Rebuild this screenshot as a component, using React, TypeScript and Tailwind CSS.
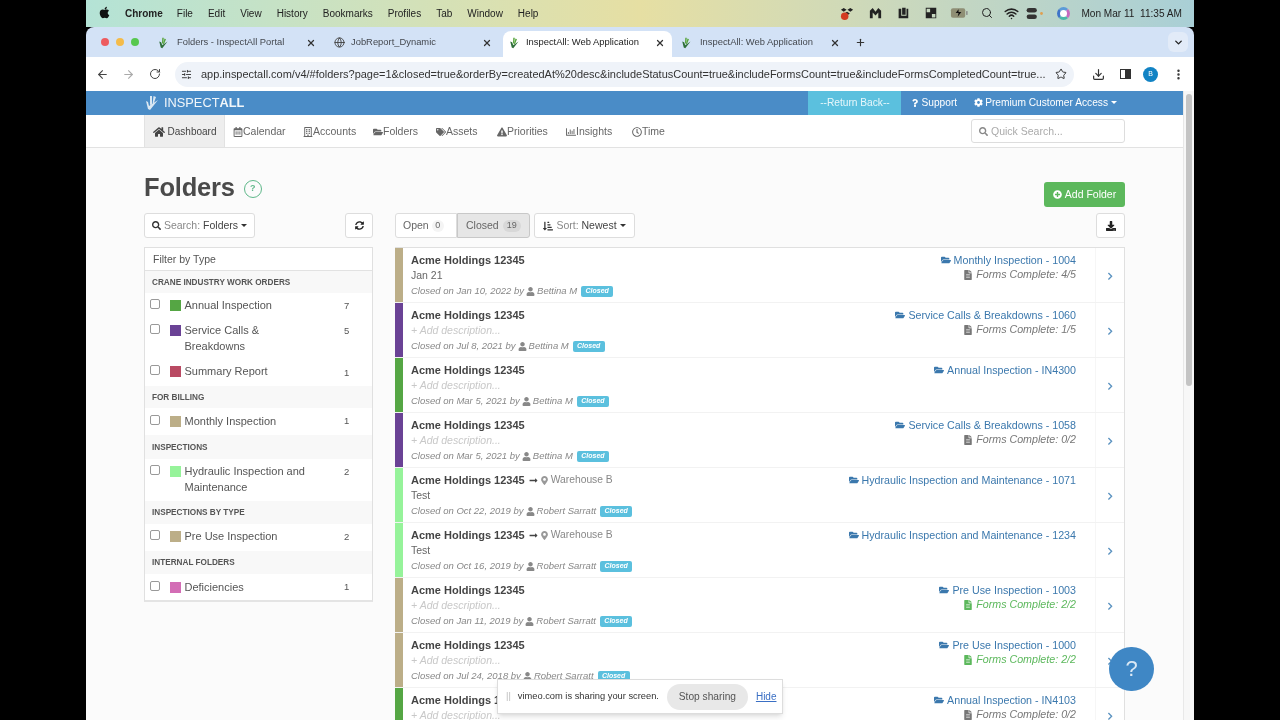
import React from "react";
import {
  FaApple, FaHome, FaRegCalendarAlt, FaRegBuilding, FaFolderOpen, FaTags, FaExclamationTriangle, FaRegChartBar, FaRegClock,
  FaSearch, FaSyncAlt, FaSortAmountDownAlt, FaUser, FaMapMarkerAlt, FaLongArrowAltRight, FaFileAlt, FaChevronRight,
  FaPlusCircle, FaDownload, FaCog, FaQuestion,
} from "react-icons/fa";
import { ArrowLeft, ArrowRight, RotateCw, Star, Download, MoreVertical, SlidersHorizontal, Globe, X, Plus, ChevronDown, Search, Wifi } from "lucide-react";

const Logo = ({ className }: { className?: string }) => (
  <svg viewBox="0 0 16 16" className={className}>
    <path d="M7 1 L9 1 L8.500 8 L6.500 9 Z" fill="#5aa63f" />
    <path d="M10 2 L12 3 L9.500 9 L7.500 10 Z" fill="#5aa63f" />
    <path d="M3 6 L5.500 7 L7 11 L14 6 L7 15 L5 14 Z" fill="#2f6f3a" />
  </svg>
);

const menu = ["File", "Edit", "View", "History", "Bookmarks", "Profiles", "Tab", "Window", "Help"];

const Slot = ({ w, children }: { w: string; children: React.ReactNode }) => (
  <div className={`${w} flex items-center justify-center`}>{children}</div>
);

function MenuBar() {
  return (
    <div className="h-[27px] shrink-0 flex items-center pl-[12px] pr-[12px] text-[10px] text-[#222] bg-gradient-to-r from-[#b4e3d6] via-[#e6dfa3] to-[#a9cfd6]">
      <FaApple className="text-[13px] text-[#111] mr-[14px] mb-[2px]" />
      <span className="font-bold mr-[14px]">Chrome</span>
      <div className="flex gap-[15px]">
        {menu.map((m) => (<span key={m}>{m}</span>))}
      </div>
      <div className="ml-auto flex items-center text-[#222]">
        <div className="flex items-center mr-[11px]">
          <Slot w="w-[28px]"><svg viewBox="0 0 16 16" className="w-[15px] h-[15px]"><path d="M4 2l3 2-3 2-3-2zM11 2l3 2-3 2-3-2zM7.500 6l3 2-3 2-3-2z" fill="#222" /><circle cx="5" cy="11" r="4" fill="#d33c22" /></svg></Slot>
          <Slot w="w-[28px]"><svg viewBox="0 0 16 16" className="w-[15px] h-[15px]"><path d="M2 13V5l3-3 3 4 3-4 3 3v8h-3V7L8 10 5 7v6z" fill="#222" /></svg></Slot>
          <Slot w="w-[28px]"><svg viewBox="0 0 16 16" className="w-[14px] h-[14px]"><path d="M3 3h3v8h6V3h2v11H3zM7 2h4v8H7z" fill="#222" /></svg></Slot>
          <Slot w="w-[28px]"><svg viewBox="0 0 16 16" className="w-[14px] h-[14px]"><path d="M2 2h12v12H2zM3 3v4h4V3zM9 9v4h4V9z" fill="#222" fillRule="evenodd" /></svg></Slot>
          <Slot w="w-[28px]"><svg viewBox="0 0 20 12" className="w-[19px] h-[12px]"><rect x="1" y="1" width="15" height="10" rx="2" fill="#8f8f75" /><path d="M9 2l-3 4h3l-1 4 4-5H9z" fill="#111" /><rect x="17" y="4" width="1.500" height="4" fill="#888" /></svg></Slot>
          <Slot w="w-[27px]"><Search size={12} strokeWidth={2} /></Slot>
          <Slot w="w-[23px]"><Wifi size={15} strokeWidth={2.5} /></Slot>
          <Slot w="w-[23px]"><svg viewBox="0 0 20 14" className="w-[20px] h-[13px]"><rect x="1" y="1" width="11" height="5" rx="2.500" fill="#333" /><rect x="1" y="8" width="11" height="5" rx="2.500" fill="#333" /><circle cx="17" cy="7" r="1.500" fill="#e0a050" /></svg></Slot>
        </div>
        <div className="w-[13px] h-[13px] rounded-full mr-[11px] border-[3px] border-t-[#5b9bd8] border-r-[#c66ac0] border-b-[#4cb8a8] border-l-[#3f74c8] bg-white" />
        <span className="text-[10.100px] whitespace-pre">Mon Mar 11  11:35 AM</span>
      </div>
    </div>
  );
}

const TabItem = ({ title, active, globe, w }: { title: string; active?: boolean; globe?: boolean; w: string }) => (
  <div className={`h-[26px] pb-[3px] flex items-center shrink-0 text-[9.400px] text-[#44484f] ${w} ${active ? "bg-white rounded-t-[8px] pl-[5px] pr-[7px]" : "pl-[8px]"}`}>
    {globe ? <Globe size={11} className="mr-[6px] text-[#444]" /> : <Logo className={`w-[12px] h-[12px] ${active ? "mr-[6px]" : "mr-[8px]"}`} />}
    <span className={active ? "text-[#222]" : ""}>{title}</span>
    <X size={10} strokeWidth={3} className="ml-auto text-[#333]" />
  </div>
);

function TabStrip() {
  return (
    <div className="h-[30px] shrink-0 bg-[#d3e2f6] rounded-t-[8px] flex items-end pl-[15px] pr-[6px]">
      <div className="h-full flex items-center gap-[7px] mr-[10px] pb-[1px]">
        <span className="w-[8px] h-[8px] rounded-full bg-[#ed5b5f]" />
        <span className="w-[8px] h-[8px] rounded-full bg-[#f4bb4a]" />
        <span className="w-[8px] h-[8px] rounded-full bg-[#57c84f]" />
      </div>
      <TabItem title="Folders - InspectAll Portal" w="w-[177px] pr-[10px]" />
      <TabItem title="JobReport_Dynamic" globe w="w-[177px] pr-[11px]" />
      <TabItem title="InspectAll: Web Application" active w="w-[169px]" />
      <TabItem title="InspectAll: Web Application" w="w-[171px] pr-[3px]" />
      <div className="h-full flex items-center pl-[12px]"><Plus size={11} strokeWidth={2.5} className="text-[#333]" /></div>
      <div className="ml-auto h-full flex items-center"><div className="w-[20px] h-[20px] rounded-[6px] bg-[#e2ebf8] flex items-center justify-center"><ChevronDown size={11} strokeWidth={3} className="text-[#222]" /></div></div>
    </div>
  );
}

function Toolbar() {
  return (
    <div className="h-[34px] shrink-0 bg-white flex items-center pl-[10px]">
      <ArrowLeft size={13} strokeWidth={2} className="text-[#444] mr-[13px]" />
      <ArrowRight size={13} strokeWidth={2} className="text-[#aaa] mr-[14px]" />
      <RotateCw size={12} strokeWidth={2} className="text-[#444] mr-[14px]" />
      <div className="w-[899px] h-[25px] rounded-full bg-[#eff3f9] flex items-center pl-[6px] pr-[7px] text-[10.970px] text-[#333] mr-[18px]">
        <SlidersHorizontal size={11} className="text-[#333] mr-[9px]" />
        <span className="whitespace-nowrap">app.inspectall.com/v4/#folders?page=1&amp;closed=true&amp;orderBy=createdAt%20desc&amp;includeStatusCount=true&amp;includeFormsCount=true&amp;includeFormsCompletedCount=true...</span>
        <Star size={12} strokeWidth={2} className="ml-auto text-[#333] shrink-0" />
      </div>
      <Download size={13} strokeWidth={2.2} className="text-[#333] mr-[15px]" />
      <div className="w-[11px] h-[10px] border border-[#333] flex justify-end mr-[12px]"><div className="w-[5px] h-full bg-[#333]" /></div>
      <div className="w-[15px] h-[15px] rounded-full bg-[#1283c4] text-white text-[7px] flex items-center justify-center mr-[14px]">B</div>
      <MoreVertical size={13} strokeWidth={2.5} className="text-[#333]" />
    </div>
  );
}

const navs: [React.ComponentType<{ className?: string }>, string, string][] = [
  [FaRegCalendarAlt, "Calendar", "w-[70px]"],
  [FaRegBuilding, "Accounts", "w-[70px]"],
  [FaFolderOpen, "Folders", "w-[63px]"],
  [FaTags, "Assets", "w-[61px]"],
  [FaExclamationTriangle, "Priorities", "w-[69px]"],
  [FaRegChartBar, "Insights", "w-[66px]"],
  [FaRegClock, "Time", "w-[50px]"],
];

function TopNav() {
  return (
    <>
      <div className="h-[24px] shrink-0 bg-[#4a8cc7] flex text-white text-[10.200px]">
        <div className="flex items-center ml-[58px]">
          <svg viewBox="0 0 16 16" className="w-[16px] h-[16px] mr-[4px]"><path d="M6 1h2v8L6 10zM9.500 1 12 2 9.500 9 8.500 9.500zM2 6l2 1 1 4 9-6-8 10-2-1z" fill="#dbe8f3" /></svg>
          <span className="text-[12.800px] text-[#f1f6fa]">INSPECT<b>ALL</b></span>
        </div>
        <div className="ml-auto flex items-center h-full mr-[66px]">
          <div className="w-[93px] h-full bg-[#5bc0de] flex items-center justify-center text-[#e8f7fb]">--Return Back--</div>
          <span className="ml-[10px] flex items-center"><FaQuestion className="text-[8px] mr-[2px]" />Support</span>
          <span className="ml-[17px] flex items-center"><FaCog className="text-[9px] mr-[2px]" />Premium Customer Access<span className="ml-[3px] border-x-[3px] border-x-transparent border-t-[3px] border-t-white" /></span>
        </div>
      </div>
      <div className="h-[33px] shrink-0 bg-white border-b border-[#e2e2e2] flex items-center pl-[58px] pr-[58px] text-[10.500px] text-[#666]">
        <div className="h-full w-[81px] bg-[#eee] border-x border-[#e2e2e2] flex items-center justify-center text-[#444] text-[10px] pt-[1px]"><FaHome className="text-[12px] mr-[3px]" />Dashboard</div>
        <div className="flex ml-[8px] pt-[2px]">
          {navs.map(([I, t, w]) => (
            <div key={t} className={`flex items-center ${w}`}><I className="text-[10px] text-[#666]" />{t}</div>
          ))}
        </div>
        <div className="ml-auto w-[154px] h-[24px] bg-white border border-[#ddd] rounded-[3px] flex items-center pl-[7px] pt-[1px] text-[#aaa]"><FaSearch className="text-[9px] text-[#888] mr-[3px]" />Quick Search...</div>
      </div>
    </>
  );
}

const Caret = () => <span className="ml-[3px] border-x-[3px] border-x-transparent border-t-[3px] border-t-[#333]" />;
const btn = "h-[25px] bg-white border border-[#ddd] rounded-[3px] flex items-center text-[#666]";

type FRow = { color: string; name: React.ReactNode; n: number; h: string; pt: string };
const groups: { title: string; h: string; rows: FRow[] }[] = [
  { title: "CRANE INDUSTRY WORK ORDERS", h: "h-[22px]", rows: [
    { color: "#55a644", name: "Annual Inspection", n: 7, h: "h-[25px]", pt: "pt-[5px]" },
    { color: "#6a4295", name: <>Service Calls &amp;<br />Breakdowns</>, n: 5, h: "h-[42px]", pt: "pt-[5px]" },
    { color: "#b94a63", name: "Summary Report", n: 1, h: "h-[26px]", pt: "pt-[4px]" },
  ] },
  { title: "FOR BILLING", h: "h-[22px]", rows: [{ color: "#bcae88", name: "Monthly Inspection", n: 1, h: "h-[27px]", pt: "pt-[6px]" }] },
  { title: "INSPECTIONS", h: "h-[24px]", rows: [{ color: "#96f39a", name: <>Hydraulic Inspection and<br />Maintenance</>, n: 2, h: "h-[42px]", pt: "pt-[5px]" }] },
  { title: "INSPECTIONS BY TYPE", h: "h-[23px]", rows: [{ color: "#bcae88", name: "Pre Use Inspection", n: 2, h: "h-[27px]", pt: "pt-[5px]" }] },
  { title: "INTERNAL FOLDERS", h: "h-[23px]", rows: [{ color: "#d36db5", name: "Deficiencies", n: 1, h: "h-[26px]", pt: "pt-[6px]" }] },
];

function Sidebar() {
  return (
    <div className="w-[229px] shrink-0 border-x border-t border-[#e0e0e0] border-b-2 border-b-[#e4e4e4] bg-white self-start">
      <div className="h-[23px] pt-[1px] border-b border-[#e2e2e2] flex items-center pl-[8px] text-[10.500px] text-[#555]">Filter by Type</div>
      {groups.map((g) => (
        <div key={g.title}>
          <div className={`${g.h} pt-[2px] bg-[#f8f8f8] flex items-center pl-[7px] text-[8.200px] font-bold text-[#555]`}>{g.title}</div>
          {g.rows.map((r, i) => (
            <div key={i} className={`${r.h} ${r.pt} flex relative`}>
              <span className="w-[10px] h-[10px] ml-[5px] mt-[1px] border border-[#999] rounded-[2px] bg-white shrink-0" />
              <span className="w-[11px] h-[11px] ml-[10px] mt-[2px] shrink-0" style={{ background: r.color }} />
              <span className="ml-[3.500px] text-[11px] leading-[15.500px] text-[#555]">{r.name}</span>
              <span className="absolute left-[199px] top-[6px] text-[9.500px] text-[#555]">{r.n}</span>
            </div>
          ))}
        </div>
      ))}
    </div>
  );
}

type Row = { color: string; date: string; by: string; desc?: string; loc?: boolean; folder: string; forms?: string; done?: boolean };
const rows: Row[] = [
  { color: "#bcae88", date: "Jan 10, 2022", by: "Bettina M", desc: "Jan 21", folder: "Monthly Inspection - 1004", forms: "4/5" },
  { color: "#6a4295", date: "Jul 8, 2021", by: "Bettina M", folder: "Service Calls & Breakdowns - 1060", forms: "1/5" },
  { color: "#55a644", date: "Mar 5, 2021", by: "Bettina M", folder: "Annual Inspection - IN4300" },
  { color: "#6a4295", date: "Mar 5, 2021", by: "Bettina M", folder: "Service Calls & Breakdowns - 1058", forms: "0/2" },
  { color: "#96f39a", date: "Oct 22, 2019", by: "Robert Sarratt", desc: "Test", loc: true, folder: "Hydraulic Inspection and Maintenance - 1071" },
  { color: "#96f39a", date: "Oct 16, 2019", by: "Robert Sarratt", desc: "Test", loc: true, folder: "Hydraulic Inspection and Maintenance - 1234" },
  { color: "#bcae88", date: "Jan 11, 2019", by: "Robert Sarratt", folder: "Pre Use Inspection - 1003", forms: "2/2", done: true },
  { color: "#bcae88", date: "Jul 24, 2018", by: "Robert Sarratt", folder: "Pre Use Inspection - 1000", forms: "2/2", done: true },
  { color: "#55a644", date: "Mar 5, 2021", by: "Bettina M", folder: "Annual Inspection - IN4103", forms: "0/2" },
];

function ListRow({ r }: { r: Row }) {
  return (
    <div className="h-[55px] shrink-0 flex border-b border-[#f2f2f2] bg-white">
      <div className="w-[8px] shrink-0" style={{ background: r.color }} />
      <div className="flex-1 pl-[8px] pt-[5px] min-w-0">
        <div className="h-[14px] flex items-center text-[11px] whitespace-nowrap">
          <b className="text-[#444]">Acme Holdings 12345</b>
          {r.loc && (<span className="flex items-center text-[#888] ml-[4px] text-[10.300px]"><FaLongArrowAltRight className="text-[9px] text-[#444] mr-[2px]" /><FaMapMarkerAlt className="text-[9px] text-[#999] mr-[2px]" />Warehouse B</span>)}
        </div>
        {r.desc ? (
          <div className="h-[16px] mt-[1px] flex items-center text-[10.500px] text-[#666]">{r.desc}</div>
        ) : (
          <div className="h-[16px] mt-[1px] flex items-center text-[10.500px] italic text-[#c8c8c8]">+ Add description...</div>
        )}
        <div className="h-[15px] flex items-center text-[9.500px] italic text-[#888] whitespace-nowrap">
          Closed on {r.date} by <FaUser className="text-[9px] mx-[2px] text-[#888]" />{r.by}
          <span className="ml-[4px] h-[11px] w-[32px] justify-center rounded-[2px] bg-[#5bc0de] text-white font-bold text-[7px] flex items-center italic">Closed</span>
        </div>
      </div>
      <div className="pt-[5px] pr-[19px] flex flex-col items-end">
        <div className="h-[14px] flex items-center text-[#3b78ad] text-[10.700px] whitespace-nowrap"><FaFolderOpen className="text-[10px] mr-[3px]" />{r.folder}</div>
        {r.forms && (
          <div className={`h-[15px] flex items-center italic text-[10.700px] whitespace-nowrap ${r.done ? "text-[#5cb85c]" : "text-[#777]"}`}><FaFileAlt className="text-[10px] mr-[3px]" />Forms Complete: {r.forms}</div>
        )}
      </div>
      <div className="w-[29px] shrink-0 border-l border-[#f6f6f6] flex items-center pl-[10px] pt-[2px]"><FaChevronRight className="text-[8.500px] text-[#5a92c0]" /></div>
    </div>
  );
}

function Main() {
  return (
    <div className="flex-1 min-w-0 flex flex-col">
      <div className="flex h-[25px] shrink-0 text-[10.500px]">
        <div className="flex">
          <div className={`${btn} rounded-r-none w-[62px] pl-[7px]`}>Open<span className="ml-[3px] w-[12px] h-[12px] rounded-full bg-[#f4f4f4] text-[9px] flex items-center justify-center">0</span></div>
          <div className="h-[25px] w-[73px] bg-[#e6e6e6] border border-[#c8c8c8] rounded-r-[3px] flex items-center pl-[8px] text-[#666]">Closed<span className="ml-[4px] w-[18px] h-[12px] rounded-full bg-[#d8d8d8] text-[9px] flex items-center justify-center">19</span></div>
        </div>
        <div className={`${btn} ml-[4px] w-[101px] justify-center`}><FaSortAmountDownAlt className="text-[10px] text-[#333] mr-[3px]" /><span className="text-[#888]">Sort:&nbsp;</span><span className="text-[#444]">Newest</span><Caret /></div>
        <div className={`${btn} ml-auto w-[29px] justify-center`}><FaDownload className="text-[10px] text-[#222]" /></div>
      </div>
      <div className="mt-[9px] border-t border-r border-[#e0e0e0] flex flex-col">
        {rows.map((r, i) => (<ListRow key={i} r={r} />))}
      </div>
    </div>
  );
}

function Page() {
  return (
    <div className="flex-1 flex min-h-0">
      <div className="flex-1 min-w-0 flex flex-col bg-[#fbfbfb] relative overflow-hidden">
        <TopNav />
        <div className="px-[58px] flex flex-col">
          <div className="h-[65px] shrink-0 flex items-start">
            <h1 className="mt-[23px] text-[25.500px] leading-[32px] font-bold text-[#4a4a4a] tracking-[-0.2px]">Folders</h1>
            <span className="mt-[32px] ml-[9px] w-[18px] h-[18px] rounded-full border border-[#5fb88a] text-[#5fb88a] text-[9px] font-bold flex items-center justify-center">?</span>
            <div className="ml-auto mt-[34px] h-[25px] w-[81px] bg-[#5cb85c] rounded-[3px] text-white text-[10.500px] flex items-center justify-center"><FaPlusCircle className="text-[9px] mr-[3px]" />Add Folder</div>
          </div>
          <div className="flex gap-[22px]">
            <div className="flex flex-col w-[229px] shrink-0">
              <div className="flex justify-between h-[25px] shrink-0 mb-[9px] text-[10.500px]">
                <div className={`${btn} w-[111px] justify-center`}><FaSearch className="text-[9px] text-[#333] mr-[3px]" /><span className="text-[#888]">Search:&nbsp;</span><span className="text-[#444]">Folders</span><Caret /></div>
                <div className={`${btn} w-[28px] justify-center`}><FaSyncAlt className="text-[9px] text-[#222]" /></div>
              </div>
              <Sidebar />
            </div>
            <Main />
          </div>
        </div>
        <div className="absolute left-[1023px] top-[556px] w-[45px] h-[44px] pb-[2px] rounded-full bg-[#3f87c5] text-[#dbe9f5] flex items-center justify-center text-[22px]">?</div>
        <div className="absolute left-[411px] top-[588px] w-[286px] h-[35px] bg-white border border-[#ddd] shadow-md flex items-center text-[9.300px] text-[#333]">
          <span className="ml-[8px] text-[#bbb] mr-[7px]">||</span>
          vimeo.com is sharing your screen.
          <span className="ml-[8px] w-[81px] h-[26px] rounded-full bg-[#e8e8e8] flex items-center justify-center text-[10.200px] text-[#555]">Stop sharing</span>
          <span className="ml-[8px] text-[10px] text-[#3a6fc4] underline">Hide</span>
        </div>
      </div>
      <div className="w-[11px] shrink-0 bg-[#f7f7f7] border-l border-[#e8e8e8] pt-[3px] pl-[2px]"><div className="w-[6px] h-[292px] rounded-full bg-[#c4c4c4]" /></div>
    </div>
  );
}

export default function App() {
  return (
    <div className="w-[1280px] h-[720px] bg-black pl-[86px] pr-[86px] overflow-hidden blur-[0.35px]" style={{ fontFamily: '"Liberation Sans", Arial, sans-serif' }}>
      <div className="w-[1108px] h-full flex flex-col overflow-hidden">
        <MenuBar />
        <TabStrip />
        <Toolbar />
        <Page />
      </div>
    </div>
  );
}
